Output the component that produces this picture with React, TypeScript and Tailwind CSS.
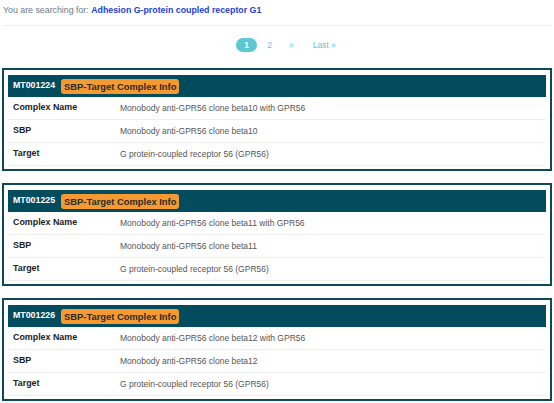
import React from 'react';

const entries = [
  { id: 'MT001224', clone: 'beta10' },
  { id: 'MT001225', clone: 'beta11' },
  { id: 'MT001226', clone: 'beta12' },
];

function ComplexCard({ id, clone }: { id: string; clone: string }) {
  const rows = [
    { label: 'Complex Name', value: `Monobody anti-GPR56 clone ${clone} with GPR56` },
    { label: 'SBP', value: `Monobody anti-GPR56 clone ${clone}` },
    { label: 'Target', value: 'G protein-coupled receptor 56 (GPR56)' },
  ];

  return (
    <div className="border-2 border-[#0c4a5a] px-[4px] pt-[5px] pb-[3px] mb-[12px]">
      <div className="h-[22px] bg-[#034c5d] flex items-center pl-[5px] gap-[6px]">
        <span className="text-white font-bold text-[8.8px]">{id}</span>
        <span className="bg-[#f49a31] text-[#2a2a2a] font-bold text-[9.4px] leading-[15px] px-[3px] rounded-[3px]">
          SBP-Target Complex Info
        </span>
      </div>
      {rows.map((row) => (
        <div key={row.label} className="flex h-[23px] items-center border-b border-[#eeeeee]">
          <div className="w-[112px] pl-[5px] font-bold text-[#222] text-[8.9px]">{row.label}</div>
          <div className="text-[#555] text-[8.5px]">{row.value}</div>
        </div>
      ))}
    </div>
  );
}

export default function App() {
  return (
    <div className="w-[554px] h-[403px] overflow-hidden bg-white px-[2px] pt-[4px]" style={{ fontFamily: '"Liberation Sans", Arial, sans-serif' }}>
      <p className="text-[8.8px] text-[#6b7a88] leading-[12px] pl-[1px]">
        You are searching for: <span className="font-bold text-[#1d3fd0]">Adhesion G-protein coupled receptor G1</span>
      </p>
      <div className="border-t border-[#eeeeee] mt-[9px] mx-[1px]" />
      <div className="flex justify-center items-center h-[42px] pb-[4px] pl-[18px] text-[8.5px] text-[#5bc8d3]">
        <span className="bg-[#5bc8d3] text-white font-bold rounded-full w-[21px] h-[14px] flex items-center justify-center">1</span>
        <span className="ml-[10px]">2</span>
        <span className="ml-[17px]">»</span>
        <span className="ml-[19px]">Last »</span>
      </div>
      {entries.map((e) => (
        <ComplexCard key={e.id} {...e} />
      ))}
    </div>
  );
}
